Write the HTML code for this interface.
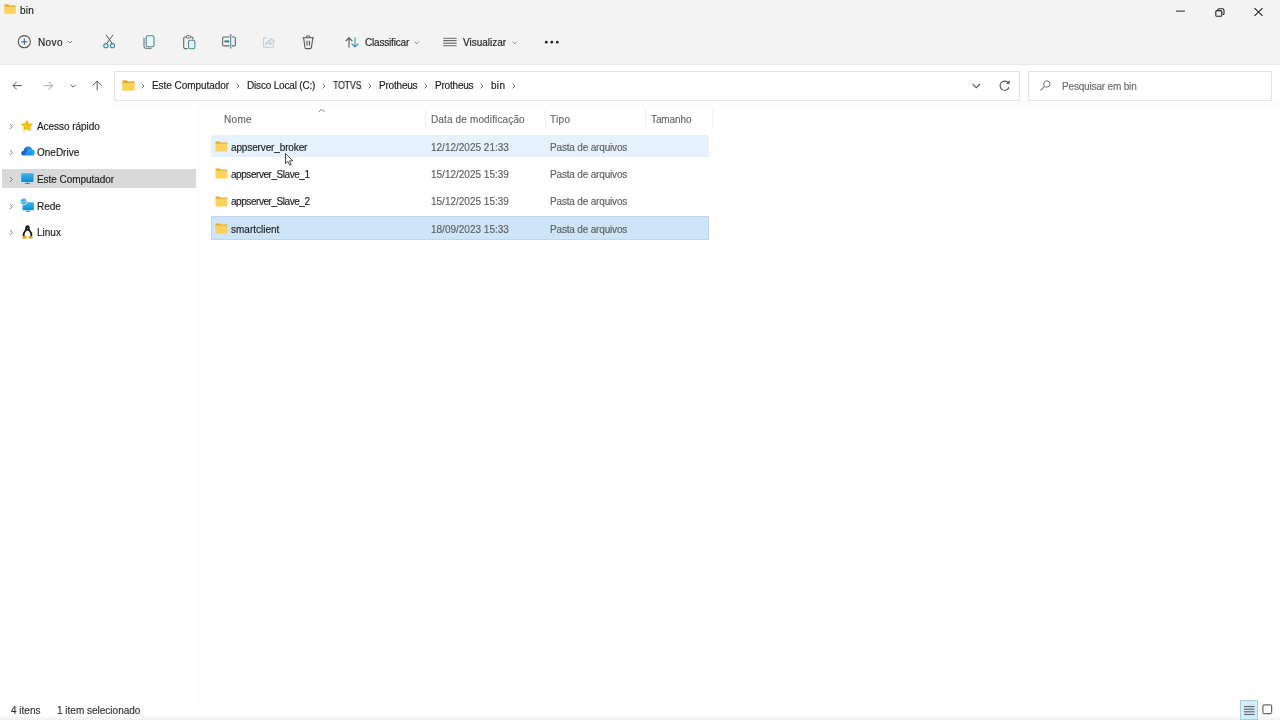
<!DOCTYPE html>
<html><head><meta charset="utf-8">
<style>
*{margin:0;padding:0;box-sizing:border-box}
html,body{width:1280px;height:720px;overflow:hidden;background:#fff;-webkit-font-smoothing:antialiased;font-family:"Liberation Sans",sans-serif;color:#1b1b1b}
.a{position:absolute}
.t{position:absolute;font-size:10px;line-height:10px;white-space:nowrap;will-change:transform;-webkit-text-stroke:0.15px currentColor}
#top{position:absolute;left:0;top:0;width:1280px;height:64px;background:#f3f3f3}
#addr{position:absolute;left:114px;top:71px;width:906px;height:30px;border:1px solid #e4e4e4;background:#fff}
#search{position:absolute;left:1028px;top:71px;width:244px;height:30px;border:1px solid #e4e4e4;background:#fff}
.g{color:#5f5f5f}
svg{position:absolute;overflow:visible}
.sep{position:absolute;top:108px;width:1px;height:19px;background:#efefef}
</style></head><body>
<div id="top"></div>
<div class="a" style="left:0;top:64px;width:1280px;height:1px;background:#ebebeb"></div>

<!-- title -->
<svg style="left:4px;top:4px" width="12" height="10" viewBox="0 0 13 11">
 <path d="M0.5 1.2 Q0.5 0.5 1.2 0.5 H4.6 L5.8 1.6 H11.8 Q12.5 1.6 12.5 2.3 V10 Q12.5 10.5 12 10.5 H1 Q0.5 10.5 0.5 10 Z" fill="#f7c545"/>
 <path d="M0.5 1.2 Q0.5 0.5 1.2 0.5 H4.6 L5.8 1.6 H11.8 Q12.5 1.6 12.5 2.3 V3 H0.5 Z" fill="#e9a92a"/>
 <rect x="0.5" y="3" width="12" height="7.5" fill="#fbd25b"/>
</svg>
<div class="t" style="left:19.6px;top:5.6px;letter-spacing:0.2px">bin</div>

<!-- window controls -->
<svg style="left:1176px;top:10px" width="9" height="2"><rect x="0" y="0.6" width="9" height="1" fill="#2b2b2b"/></svg>
<svg style="left:1214.5px;top:7.5px" width="10" height="9" viewBox="0 0 10 9"><rect x="0.8" y="2.6" width="6" height="5.7" rx="1.1" fill="none" stroke="#222" stroke-width="1.1"/><path d="M2.6 1.9 Q2.8 0.7 4 0.7 H7.4 Q9 0.7 9 2.3 V5.4 Q9 6.5 7.8 6.6" fill="none" stroke="#222" stroke-width="1.1"/></svg>
<svg style="left:1254px;top:8px" width="9" height="8" viewBox="0 0 9 8"><path d="M0.5 0.2 L8.5 7.8 M8.5 0.2 L0.5 7.8" stroke="#222" stroke-width="1.1"/></svg>

<!-- toolbar -->
<svg style="left:17px;top:35px" width="14" height="14" viewBox="0 0 14 14"><circle cx="7.3" cy="6.7" r="6.1" fill="none" stroke="#555" stroke-width="1.1"/><path d="M7.3 3.6 V9.8 M4.2 6.7 H10.4" stroke="#2a6b7a" stroke-width="1.1"/></svg>
<div class="t" style="left:38px;top:38px;letter-spacing:0.4px">Novo</div>
<svg style="left:67px;top:40px" width="6" height="4" viewBox="0 0 6 4"><path d="M0.8 0.8 L3 3 L5.2 0.8" fill="none" stroke="#777" stroke-width="0.9"/></svg>

<!-- scissors -->
<svg style="left:102.5px;top:34px" width="13" height="15" viewBox="0 0 13 15">
 <path d="M3 0.8 L9.3 9.6 M10 0.8 L3.7 9.6" stroke="#555" stroke-width="1"/>
 <circle cx="2.9" cy="11.7" r="2.1" fill="#dff4fa" stroke="#3b8fa6" stroke-width="1.1"/>
 <circle cx="9.5" cy="11.7" r="2.1" fill="#dff4fa" stroke="#3b8fa6" stroke-width="1.1"/>
</svg>
<!-- copy -->
<svg style="left:143px;top:34.5px" width="12" height="14" viewBox="0 0 12 14">
 <path d="M1 2.8 V10.8 Q1 13.3 3.5 13.3 H8.6" fill="none" stroke="#6d8e99" stroke-width="1.3"/>
 <rect x="3.2" y="0.8" width="7.8" height="11" rx="1.9" fill="#eaf7fb" stroke="#4f8797" stroke-width="1.1"/>
</svg>
<!-- paste -->
<svg style="left:182.5px;top:34.5px" width="13" height="15" viewBox="0 0 13 15">
 <path d="M4.6 13.6 H2.2 Q0.7 13.6 0.7 12.1 V3.4 Q0.7 2 2.2 2 H3.2 M7.6 2 H8.6 Q10 2 10 3.4 V4.6" fill="none" stroke="#666" stroke-width="1.1"/>
 <rect x="3.3" y="0.6" width="4.3" height="2.4" rx="1" fill="#f3f3f3" stroke="#666" stroke-width="1"/>
 <rect x="5.5" y="5.2" width="6.4" height="8.6" rx="1.6" fill="#e4f6fb" stroke="#3f8ea3" stroke-width="1.1"/>
</svg>
<!-- rename -->
<svg style="left:222px;top:34.2px" width="14" height="15" viewBox="0 0 14 15">
 <path d="M7.4 3 H2 Q0.6 3 0.6 4.4 V10.5 Q0.6 11.9 2 11.9 H7.4 M9.8 3 H12 Q13.4 3 13.4 4.4 V10.5 Q13.4 11.9 12 11.9 H9.8" fill="none" stroke="#666" stroke-width="1.1"/>
 <path d="M8.6 0.8 V14" stroke="#4fa0b4" stroke-width="1.3"/>
 <path d="M7.6 0.8 H9.6 M7.6 14 H9.6" stroke="#4fa0b4" stroke-width="0.9"/>
 <path d="M2.4 7.4 H7.2" stroke="#2a6f85" stroke-width="1.9"/>
</svg>
<!-- share (disabled) -->
<svg style="left:262.5px;top:36px" width="13" height="12" viewBox="0 0 13 12">
 <path d="M4 2 H1.5 Q0.6 2 0.6 2.9 V10.4 Q0.6 11.3 1.5 11.3 H9.6 Q10.5 11.3 10.5 10.4 V9" fill="none" stroke="#c3c9d3" stroke-width="1.1"/>
 <path d="M2.6 8.5 Q3.4 4.6 7.4 4.3 V2.2 L12 5.6 L7.4 9 V6.9 Q4.6 6.8 2.6 8.5 Z" fill="#e3e8f4" stroke="#bfc6d4" stroke-width="1"/>
</svg>
<!-- trash -->
<svg style="left:302.3px;top:34.5px" width="13" height="15" viewBox="0 0 13 15">
 <path d="M0.6 2.7 H11.8 M4.4 2.5 Q4.4 0.7 6.2 0.7 Q8 0.7 8 2.5" fill="none" stroke="#555" stroke-width="1.1"/>
 <path d="M1.6 2.7 L2.9 12.2 Q3.1 13.6 4.4 13.6 H8 Q9.3 13.6 9.5 12.2 L10.8 2.7" fill="none" stroke="#555" stroke-width="1.1"/>
 <path d="M5 5.7 V10.4 M7.4 5.7 V10.4" stroke="#555" stroke-width="1.1"/>
</svg>
<!-- sort -->
<svg style="left:344.5px;top:36.5px" width="14" height="11" viewBox="0 0 14 11">
 <path d="M4 0.8 V10.6 M0.6 4.2 L4 0.8 L7.4 4.2" fill="none" stroke="#555" stroke-width="1.1"/>
 <path d="M10 0.4 V10 M6.6 6.6 L10 10 L13.4 6.6" fill="none" stroke="#2f8fb5" stroke-width="1.1"/>
</svg>
<div class="t" style="left:364.5px;top:38px;letter-spacing:-0.19px">Classificar</div>
<svg style="left:414px;top:40.5px" width="6" height="4" viewBox="0 0 6 4"><path d="M0.6 0.6 L2.8 2.8 L5 0.6" fill="none" stroke="#888" stroke-width="0.9"/></svg>
<!-- view list -->
<svg style="left:443px;top:37px" width="14" height="10" viewBox="0 0 14 10">
 <rect x="0.2" y="4" width="13.4" height="2" fill="#d9d9d9"/>
 <rect x="0.2" y="0.8" width="13.4" height="1" fill="#6a6a6a"/><rect x="0.2" y="3" width="13.4" height="1" fill="#6a6a6a"/><rect x="0.2" y="5.8" width="13.4" height="1" fill="#6a6a6a"/><rect x="0.2" y="8.2" width="13.4" height="1" fill="#6a6a6a"/>
</svg>
<div class="t" style="left:463px;top:38px">Visualizar</div>
<svg style="left:512px;top:40.5px" width="6" height="4" viewBox="0 0 6 4"><path d="M0.6 0.6 L2.8 2.8 L5 0.6" fill="none" stroke="#888" stroke-width="0.9"/></svg>
<svg style="left:544px;top:40px" width="16" height="5" viewBox="0 0 16 5"><circle cx="2.3" cy="2.2" r="1.35" fill="#222"/><circle cx="7.8" cy="2.2" r="1.35" fill="#222"/><circle cx="13.3" cy="2.2" r="1.35" fill="#222"/></svg>

<!-- address row -->
<svg style="left:12px;top:81px" width="11" height="10" viewBox="0 0 11 10"><path d="M10 4.6 H1 M4.8 0.7 L0.9 4.6 L4.8 8.5" fill="none" stroke="#5a5a5a" stroke-width="1"/></svg>
<svg style="left:43px;top:81px" width="11" height="10" viewBox="0 0 11 10"><path d="M0.5 4.6 H9.5 M5.7 0.7 L9.6 4.6 L5.7 8.5" fill="none" stroke="#b9b9b9" stroke-width="1.1"/></svg>
<svg style="left:69.5px;top:83.5px" width="7" height="4" viewBox="0 0 7 4"><path d="M0.8 0.7 L3.3 3.2 L5.8 0.7" fill="none" stroke="#555" stroke-width="1"/></svg>
<svg style="left:91.5px;top:79.7px" width="11" height="11" viewBox="0 0 11 11"><path d="M5.2 10.4 V1 M0.8 5.4 L5.2 1 L9.6 5.4" fill="none" stroke="#5a5a5a" stroke-width="1"/></svg>

<div class="a" style="left:112px;top:101px;width:1168px;height:6px;background:#fdfdfd"></div>
<div id="addr"></div>
<div id="search"></div>
<svg style="left:122px;top:80px" width="13" height="11" viewBox="0 0 13 11">
 <path d="M0.5 1.2 Q0.5 0.5 1.2 0.5 H4.6 L5.8 1.6 H11.8 Q12.5 1.6 12.5 2.3 V10 Q12.5 10.5 12 10.5 H1 Q0.5 10.5 0.5 10 Z" fill="#f7c545"/>
 <path d="M0.5 1.2 Q0.5 0.5 1.2 0.5 H4.6 L5.8 1.6 H11.8 Q12.5 1.6 12.5 2.3 V3 H0.5 Z" fill="#e9a92a"/>
 <rect x="0.5" y="3" width="12" height="7.5" fill="#fbd25b"/>
</svg>
<div class="t" style="left:152px;top:81.2px;letter-spacing:-0.06px">Este Computador</div>
<div class="t" style="left:246.5px;top:81.2px;letter-spacing:-0.18px">Disco Local (C:)</div>
<div class="t" style="left:332.5px;top:81.2px;letter-spacing:-0.2px;transform:scaleX(0.88);transform-origin:0 0">TOTVS</div>
<div class="t" style="left:378.5px;top:81.2px;letter-spacing:-0.2px">Protheus</div>
<div class="t" style="left:434.5px;top:81.2px;letter-spacing:-0.2px">Protheus</div>
<div class="t" style="left:490.5px;top:81.2px;letter-spacing:0.3px">bin</div>
<svg style="left:141px;top:83px" width="4" height="6" viewBox="0 0 4 6"><path d="M0.7 0.6 L3 3 L0.7 5.4" fill="none" stroke="#666" stroke-width="0.9"/></svg>
<svg style="left:236px;top:83px" width="4" height="6" viewBox="0 0 4 6"><path d="M0.7 0.6 L3 3 L0.7 5.4" fill="none" stroke="#666" stroke-width="0.9"/></svg>
<svg style="left:322px;top:83px" width="4" height="6" viewBox="0 0 4 6"><path d="M0.7 0.6 L3 3 L0.7 5.4" fill="none" stroke="#666" stroke-width="0.9"/></svg>
<svg style="left:368px;top:83px" width="4" height="6" viewBox="0 0 4 6"><path d="M0.7 0.6 L3 3 L0.7 5.4" fill="none" stroke="#666" stroke-width="0.9"/></svg>
<svg style="left:424px;top:83px" width="4" height="6" viewBox="0 0 4 6"><path d="M0.7 0.6 L3 3 L0.7 5.4" fill="none" stroke="#666" stroke-width="0.9"/></svg>
<svg style="left:480px;top:83px" width="4" height="6" viewBox="0 0 4 6"><path d="M0.7 0.6 L3 3 L0.7 5.4" fill="none" stroke="#666" stroke-width="0.9"/></svg>
<svg style="left:512px;top:83px" width="4" height="6" viewBox="0 0 4 6"><path d="M0.7 0.6 L3 3 L0.7 5.4" fill="none" stroke="#666" stroke-width="0.9"/></svg>

<svg style="left:971.5px;top:82.5px" width="9" height="6" viewBox="0 0 9 6"><path d="M0.6 0.8 L4.3 4.6 L8 0.8" fill="none" stroke="#555" stroke-width="1.1"/></svg>
<svg style="left:999px;top:80px" width="12" height="12" viewBox="0 0 12 12"><path d="M9.4 3 A4.6 4.6 0 1 0 10 7.2" fill="none" stroke="#555" stroke-width="1.1"/><path d="M10.3 0.8 L10.4 3.6 L7.6 3.5 Z" fill="#555" stroke="#555" stroke-width="0.6" stroke-linejoin="round"/></svg>
<svg style="left:1039.5px;top:80px" width="11" height="11" viewBox="0 0 11 11"><circle cx="6.8" cy="4" r="3.2" fill="none" stroke="#777" stroke-width="1"/><path d="M4.5 6.4 L0.6 10.3" stroke="#777" stroke-width="1.1"/></svg>
<div class="t g" style="left:1062px;top:82px;color:#6b6b6b;letter-spacing:-0.17px">Pesquisar em bin</div>

<!-- nav pane -->
<div class="a" style="left:2px;top:169px;width:194px;height:19px;background:#d9d9d9"></div>
<div class="a" style="left:196px;top:108px;width:4px;height:596px;background:#fcfcfc"></div>
<svg style="left:8.5px;top:122.5px" width="5" height="7" viewBox="0 0 5 7"><path d="M0.9 1 L3.4 3.5 L0.9 6" fill="none" stroke="#6e6e6e" stroke-width="0.9"/></svg>
<svg style="left:8.5px;top:149.2px" width="5" height="7" viewBox="0 0 5 7"><path d="M0.9 1 L3.4 3.5 L0.9 6" fill="none" stroke="#6e6e6e" stroke-width="0.9"/></svg>
<svg style="left:8.5px;top:175.9px" width="5" height="7" viewBox="0 0 5 7"><path d="M0.9 1 L3.4 3.5 L0.9 6" fill="none" stroke="#6e6e6e" stroke-width="0.9"/></svg>
<svg style="left:8.5px;top:202.6px" width="5" height="7" viewBox="0 0 5 7"><path d="M0.9 1 L3.4 3.5 L0.9 6" fill="none" stroke="#6e6e6e" stroke-width="0.9"/></svg>
<svg style="left:8.5px;top:229.3px" width="5" height="7" viewBox="0 0 5 7"><path d="M0.9 1 L3.4 3.5 L0.9 6" fill="none" stroke="#6e6e6e" stroke-width="0.9"/></svg>
<!-- star -->
<svg style="left:21px;top:119.8px" width="12" height="11" viewBox="0 0 12 11"><path d="M6 0.7 L7.5 3.9 L11.2 4.3 L8.4 6.7 L9.2 10.3 L6 8.5 L2.8 10.3 L3.6 6.7 L0.8 4.3 L4.5 3.9 Z" fill="#f9c00c" stroke="#f7b90a" stroke-width="1.2" stroke-linejoin="round"/></svg>
<!-- cloud -->
<svg style="left:20.5px;top:146.2px" width="14" height="10" viewBox="0 0 14 10">
 <defs><linearGradient id="cg" x1="0" y1="0" x2="1" y2="0"><stop offset="0" stop-color="#0d4fc4"/><stop offset="0.5" stop-color="#1a86e6"/><stop offset="1" stop-color="#29b6ef"/></linearGradient></defs>
 <path d="M2.6 9.6 Q0.2 9.6 0.2 7.2 Q0.2 5 2.6 4.8 Q3.4 0.4 7.4 0.4 Q10.4 0.4 11.2 3.6 Q13.8 3.9 13.8 6.7 Q13.8 9.6 11 9.6 Z" fill="url(#cg)"/>
 <path d="M4.5 9.4 L9.2 3.2" stroke="#9fdcf7" stroke-width="0.7" opacity="0.7"/>
</svg>
<!-- monitor -->
<svg style="left:21px;top:173px" width="13" height="11" viewBox="0 0 13 11">
 <defs><linearGradient id="mg" x1="0" y1="0" x2="0" y2="1"><stop offset="0" stop-color="#35b9e6"/><stop offset="1" stop-color="#1488c9"/></linearGradient></defs>
 <rect x="0.2" y="0.2" width="12.4" height="8.8" rx="0.8" fill="url(#mg)"/>
 <rect x="6" y="9" width="0.9" height="1.5" fill="#5d6b75"/>
 <rect x="3.8" y="10.2" width="5.2" height="0.8" fill="#5d6b75"/>
</svg>
<!-- network -->
<svg style="left:20px;top:197.5px" width="14" height="14" viewBox="0 0 14 14">
 <rect x="2.5" y="4.2" width="11.3" height="8" rx="0.7" fill="url(#mg)"/>
 <rect x="7.7" y="12.2" width="0.9" height="1.1" fill="#5d6b75"/>
 <rect x="5.8" y="13" width="4.6" height="0.7" fill="#5d6b75"/>
 <circle cx="3.7" cy="3.6" r="3.3" fill="#3fa6d8" stroke="#fff" stroke-width="0.7"/>
 <path d="M1.5 3.3 Q3.6 5.6 6 2.6" fill="none" stroke="#d6f1fb" stroke-width="0.8"/>
</svg>
<!-- linux -->
<svg style="left:21.5px;top:224.8px" width="11" height="14" viewBox="0 0 11 14">
 <path d="M5.5 0.2 C7.3 0.2 7.8 1.8 7.8 3.4 C7.8 5 9 6 9.8 7.6 C10.7 9.4 10.4 11.2 9.6 12 L1.4 12 C0.6 11.2 0.3 9.4 1.2 7.6 C2 6 3.2 5 3.2 3.4 C3.2 1.8 3.7 0.2 5.5 0.2 Z" fill="#1e1e1e"/>
 <path d="M5.5 5.4 C7 5.8 8.2 7.6 8.4 9.6 C8.5 11 7.8 12.3 5.5 12.3 C3.2 12.3 2.5 11 2.6 9.6 C2.8 7.6 4 5.8 5.5 5.4 Z" fill="#fff"/>
 <ellipse cx="2.5" cy="12.3" rx="2.4" ry="1.5" fill="#e9a41c"/>
 <ellipse cx="8.5" cy="12.3" rx="2.4" ry="1.5" fill="#e9a41c"/>
 <path d="M4.7 3.3 L5.5 4.2 L6.3 3.3 Z" fill="#e9a41c"/>
</svg>
<div class="t" style="left:37px;top:121.5px;letter-spacing:-0.05px">Acesso rápido</div>
<div class="t" style="left:37px;top:148.2px">OneDrive</div>
<div class="t" style="left:37px;top:175px;letter-spacing:-0.05px">Este Computador</div>
<div class="t" style="left:37px;top:201.7px">Rede</div>
<div class="t" style="left:37px;top:228.4px">Linux</div>

<!-- column headers -->
<div class="t g" style="left:223.5px;top:115px;color:#666;letter-spacing:0.3px">Nome</div>
<svg style="left:318px;top:108px" width="8" height="5" viewBox="0 0 8 5"><path d="M0.8 4 L3.7 1 L6.6 4" fill="none" stroke="#777" stroke-width="0.9"/></svg>
<div class="sep" style="left:425px"></div>
<div class="t g" style="left:430.5px;top:115px;color:#666;letter-spacing:0.14px">Data de modificação</div>
<div class="sep" style="left:545px"></div>
<div class="t g" style="left:550px;top:115px;color:#666;letter-spacing:0.3px">Tipo</div>
<div class="sep" style="left:645px"></div>
<div class="t g" style="left:650.5px;top:115px;color:#666;letter-spacing:-0.1px">Tamanho</div>
<div class="sep" style="left:712px"></div>

<!-- rows -->
<div class="a" style="left:211px;top:135px;width:498px;height:22px;background:#e5f1fc"></div>
<div class="a" style="left:211px;top:216.3px;width:498px;height:23.7px;background:#cde4f9;border:1px solid #bcd8f1"></div>

<svg style="left:215.3px;top:141px" width="13" height="11" viewBox="0 0 13 11"><use href="#fold"/></svg>
<svg style="left:215.3px;top:168.3px" width="13" height="11" viewBox="0 0 13 11"><use href="#fold"/></svg>
<svg style="left:215.3px;top:195.6px" width="13" height="11" viewBox="0 0 13 11"><use href="#fold"/></svg>
<svg style="left:215.3px;top:222.9px" width="13" height="11" viewBox="0 0 13 11"><use href="#fold"/></svg>
<svg width="0" height="0" style="left:0;top:0"><defs><g id="fold">
 <path d="M0.5 1.2 Q0.5 0.5 1.2 0.5 H4.6 L5.8 1.6 H11.8 Q12.5 1.6 12.5 2.3 V3 H0.5 Z" fill="#e9a92a"/>
 <rect x="0.5" y="2.6" width="12" height="7.9" rx="0.5" fill="#fbd25b"/>
</g></defs></svg>

<div class="t" style="left:231px;top:142.5px;letter-spacing:-0.13px">appserver_broker</div>
<div class="t" style="left:231px;top:169.8px;letter-spacing:-0.45px">appserver_Slave_1</div>
<div class="t" style="left:231px;top:197.1px;letter-spacing:-0.45px">appserver_Slave_2</div>
<div class="t" style="left:231px;top:224.5px">smartclient</div>

<div class="t g" style="left:430.5px;top:142.5px">12/12/2025 21:33</div>
<div class="t g" style="left:430.5px;top:169.8px">15/12/2025 15:39</div>
<div class="t g" style="left:430.5px;top:197.1px">15/12/2025 15:39</div>
<div class="t g" style="left:430.5px;top:224.5px">18/09/2023 15:33</div>
<div class="t g" style="left:550px;top:142.5px;letter-spacing:-0.17px">Pasta de arquivos</div>
<div class="t g" style="left:550px;top:169.8px;letter-spacing:-0.17px">Pasta de arquivos</div>
<div class="t g" style="left:550px;top:197.1px;letter-spacing:-0.17px">Pasta de arquivos</div>
<div class="t g" style="left:550px;top:224.5px;letter-spacing:-0.17px">Pasta de arquivos</div>

<!-- cursor -->
<svg style="left:284.6px;top:152.5px" width="10" height="13" viewBox="0 0 10 13"><path d="M0.5 0.5 V10.6 L2.9 8.4 L4.6 12.2 L6.1 11.5 L4.5 7.8 L7.8 7.8 Z" fill="#fff" stroke="#222" stroke-width="0.8" stroke-linejoin="round"/></svg>

<!-- status bar -->
<div class="t" style="left:11px;top:705.5px;color:#333">4 itens</div>
<div class="t" style="left:57px;top:705.5px;color:#333">1 item selecionado</div>
<div class="a" style="left:0;top:716px;width:1280px;height:4px;background:linear-gradient(#fdfdfd,#eeeeee)"></div>
<div class="a" style="left:1239.5px;top:700px;width:18.5px;height:20px;background:#d3ecf7;border:1px solid #9fd1e8"></div>
<svg style="left:1244px;top:706px" width="11" height="9" viewBox="0 0 11 9"><path d="M0 0.6 H10.5 M0 3.2 H10.5 M0 5.8 H10.5 M0 8.4 H10.5" stroke="#444" stroke-width="0.9"/></svg>
<svg style="left:1262px;top:704px" width="11" height="11" viewBox="0 0 11 11"><rect x="0.9" y="0.9" width="8.8" height="8.8" rx="1" fill="none" stroke="#444" stroke-width="1"/></svg>
</body></html>
